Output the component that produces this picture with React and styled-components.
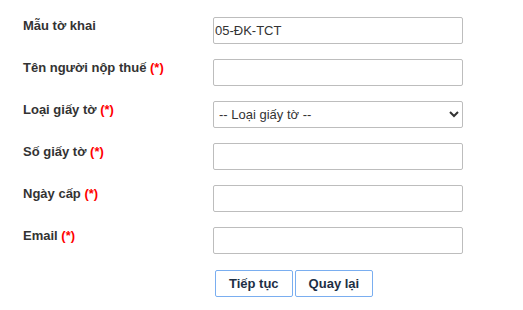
import React from "react";
import styled, { createGlobalStyle } from "styled-components";

const Global = createGlobalStyle`
  html, body { margin: 0; padding: 0; background: #fff; }
  body { font-family: Arial, "Liberation Sans", sans-serif; font-size: 13px; color: #333; }
`;

const Form = styled.form`
  padding: 17px 0 0 23px;
`;

const Grid = styled.div`
  display: grid;
  grid-template-columns: 190px 250px;
  row-gap: 15px;
`;

const Label = styled.label`
  font-weight: bold;
  font-size: 13px;
  line-height: 15px;
  padding-top: 1px;
  color: #333;
`;

const Req = styled.span`
  color: #f00;
`;

const Field = styled.input`
  box-sizing: border-box;
  width: 250px;
  height: 27px;
  margin: 0;
  padding: 0 1px;
  border: 1px solid #bdbdbd;
  border-radius: 2px;
  font-family: Arial, "Liberation Sans", sans-serif;
  font-size: 13px;
  color: #333;
  background: #fff;
  outline: none;
`;

const Select = styled.select`
  box-sizing: border-box;
  width: 250px;
  height: 27px;
  margin: 0;
  padding: 0 0 0 1px;
  border: 1px solid #bdbdbd;
  border-radius: 2px;
  font-family: Arial, "Liberation Sans", sans-serif;
  font-size: 13px;
  color: #333;
  background: #fff;
  outline: none;
`;

const Actions = styled.div`
  display: flex;
  gap: 2px;
  margin: 16px 0 0 192px;
`;

const Button = styled.button`
  box-sizing: border-box;
  height: 27px;
  padding: 0 13px;
  margin: 0;
  border: 1px solid #7aaef0;
  border-radius: 2px;
  background: #fff;
  font-family: Arial, "Liberation Sans", sans-serif;
  font-size: 13px;
  font-weight: bold;
  color: #1d2f45;
  cursor: pointer;
`;

const rows = [
  { label: "Mẫu tờ khai", req: false, value: "05-ĐK-TCT" },
  { label: "Tên người nộp thuế", req: true },
  { label: "Loại giấy tờ", req: true, select: true },
  { label: "Số giấy tờ", req: true },
  { label: "Ngày cấp", req: true },
  { label: "Email", req: true },
];

export default function App() {
  return (
    <>
      <Global />
      <Form onSubmit={(e) => e.preventDefault()}>
        <Grid>
          {rows.map((r) => (
            <React.Fragment key={r.label}>
              <Label>
                {r.label}
                {r.req && <> <Req>(*)</Req></>}
              </Label>
              {r.select ? (
                <Select defaultValue="">
                  <option value="">-- Loại giấy tờ --</option>
                </Select>
              ) : (
                <Field type="text" defaultValue={r.value || ""} />
              )}
            </React.Fragment>
          ))}
        </Grid>
        <Actions>
          <Button type="submit">Tiếp tục</Button>
          <Button type="button">Quay lại</Button>
        </Actions>
      </Form>
    </>
  );
}
